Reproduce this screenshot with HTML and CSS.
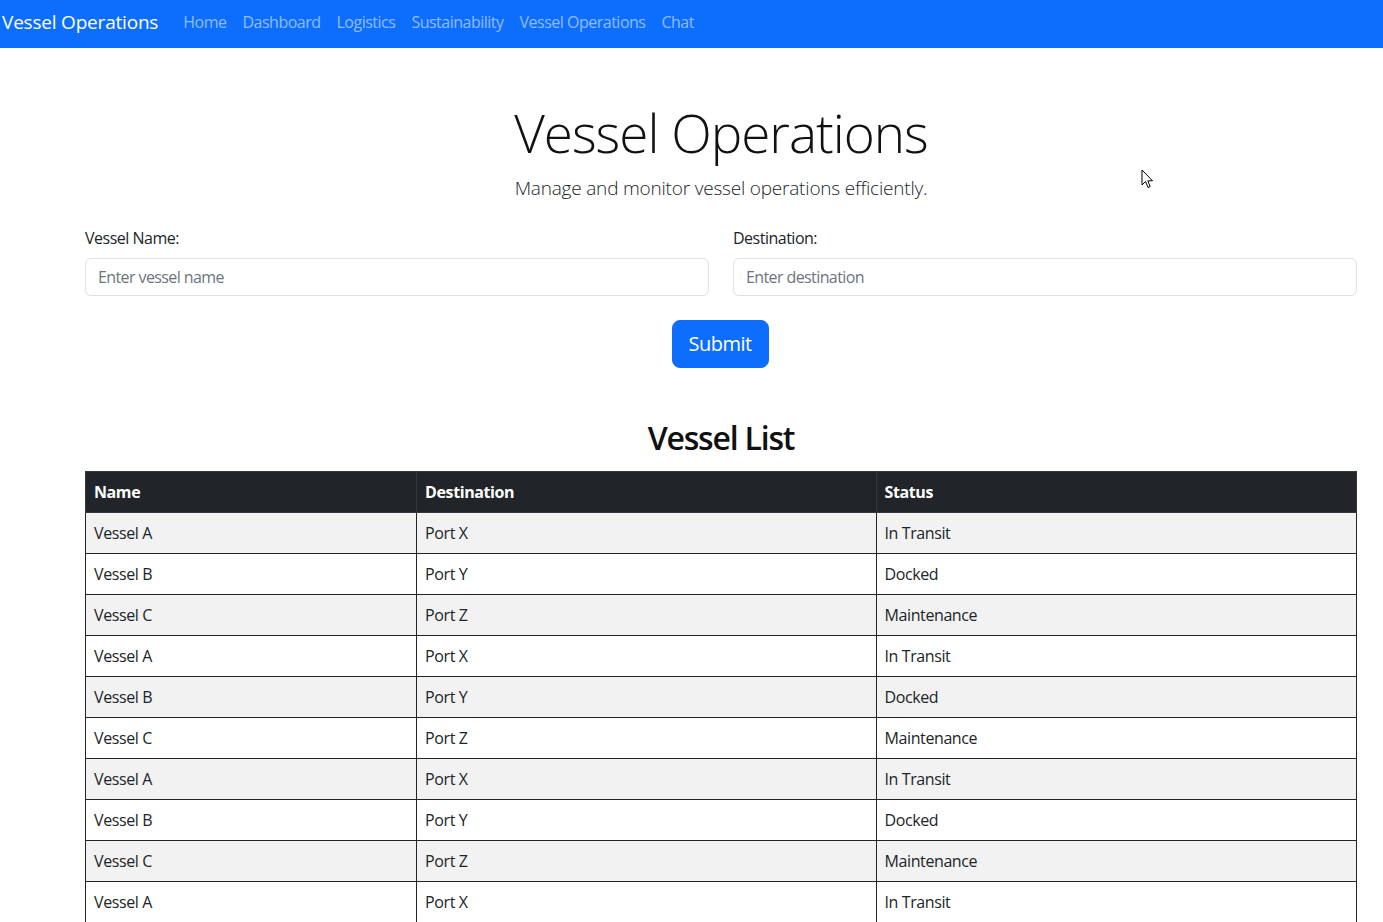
FILE: index.html
```html
<!DOCTYPE html>
<html lang="en">
<head>
<meta charset="utf-8">
<title>Vessel Operations</title>
<link rel="stylesheet" href="styles.css">
</head>
<body>
<nav class="navbar">
  <a class="brand" href="#">Vessel Operations</a>
  <ul class="nav-links">
    <li><a href="#">Home</a></li>
    <li><a href="#">Dashboard</a></li>
    <li><a href="#">Logistics</a></li>
    <li><a href="#">Sustainability</a></li>
    <li><a href="#">Vessel Operations</a></li>
    <li><a href="#">Chat</a></li>
  </ul>
</nav>
<main class="container">
  <header class="hero">
    <h1 class="display">Vessel Operations</h1>
    <p class="lead">Manage and monitor vessel operations efficiently.</p>
  </header>
  <form class="vessel-form">
    <div class="form-row">
      <div class="field">
        <label for="vname">Vessel Name:</label>
        <input id="vname" type="text" placeholder="Enter vessel name">
      </div>
      <div class="field">
        <label for="vdest">Destination:</label>
        <input id="vdest" type="text" placeholder="Enter destination">
      </div>
    </div>
    <div class="form-actions">
      <button type="button" class="btn-primary">Submit</button>
    </div>
  </form>
  <section class="list">
    <h2>Vessel List</h2>
    <table class="vessel-table">
      <colgroup><col class="c1"><col class="c2"><col class="c3"></colgroup>
      <thead>
        <tr><th>Name</th><th>Destination</th><th>Status</th></tr>
      </thead>
      <tbody>
        <tr><td>Vessel A</td><td>Port X</td><td>In Transit</td></tr>
        <tr><td>Vessel B</td><td>Port Y</td><td>Docked</td></tr>
        <tr><td>Vessel C</td><td>Port Z</td><td>Maintenance</td></tr>
        <tr><td>Vessel A</td><td>Port X</td><td>In Transit</td></tr>
        <tr><td>Vessel B</td><td>Port Y</td><td>Docked</td></tr>
        <tr><td>Vessel C</td><td>Port Z</td><td>Maintenance</td></tr>
        <tr><td>Vessel A</td><td>Port X</td><td>In Transit</td></tr>
        <tr><td>Vessel B</td><td>Port Y</td><td>Docked</td></tr>
        <tr><td>Vessel C</td><td>Port Z</td><td>Maintenance</td></tr>
        <tr><td>Vessel A</td><td>Port X</td><td>In Transit</td></tr>
      </tbody>
    </table>
  </section>
</main>
<svg class="cursor" width="13" height="21" viewBox="0 0 13 21"><path d="M1 1 L1 16 L4.5 12.5 L7 18.5 L9.2 17.6 L6.8 11.8 L11.5 11.8 Z" fill="#fff" stroke="#000" stroke-width="1" stroke-linejoin="round"/></svg>
</body>
</html>
```

FILE: styles.css
```css
* { box-sizing: border-box; }
html, body { margin: 0; padding: 0; }
body {
  font-family: "Open Sans", "Noto Sans", "Liberation Sans", sans-serif;
  font-size: 16px;
  line-height: 1.5;
  color: #212529;
  background: #fff;
  position: relative;
}
a { text-decoration: none; }

.navbar {
  height: 48px;
  background: #0d6efd;
  display: flex;
  align-items: center;
  padding: 0 2px 5px;
}
.brand {
  color: #fff;
  font-size: 19px;
  margin-right: 17px;
  letter-spacing: -0.2px;
  line-height: 30px;
}
.nav-links {
  list-style: none;
  margin: 0;
  padding: 0;
  display: flex;
}
.nav-links a {
  display: block;
  padding: 0 8px;
  color: rgba(255,255,255,0.55);
  font-size: 16px;
  letter-spacing: -0.5px;
}

.container {
  padding: 0 26px 0 85px;
}

.hero {
  text-align: center;
  padding-top: 53px;
}
.display {
  font-size: 53px;
  font-weight: 300;
  line-height: 1.2;
  margin: 0;
  letter-spacing: -1px;
  color: #111;
}
.lead {
  font-size: 19px;
  font-weight: 300;
  margin: 9px 0 0;
  letter-spacing: -0.2px;
}

.vessel-form { margin-top: 24px; }
.form-row {
  display: grid;
  grid-template-columns: 1fr 1fr;
  gap: 24px;
}
.field label {
  display: block;
  margin-bottom: 8px;
  letter-spacing: -0.5px;
}
.field input {
  display: block;
  width: 100%;
  height: 38px;
  padding: 6px 12px;
  font: inherit;
  letter-spacing: -0.6px;
  color: #212529;
  border: 1px solid #dee2e6;
  border-radius: 6px;
  background: #fff;
}
.field input::placeholder { color: #6c757d; opacity: 1; }
.form-actions {
  display: flex;
  justify-content: center;
  margin-top: 24px;
  padding-right: 2px;
}
.btn-primary {
  font: inherit;
  font-size: 20px;
  line-height: 30px;
  padding: 8px 16px;
  width: 97px;
  height: 48px;
  color: #fff;
  background: #0d6efd;
  border: 1px solid #0d6efd;
  border-radius: 8px;
  letter-spacing: -0.5px;
}

.list { margin-top: 51px; }
.list h2 {
  text-align: center;
  font-size: 32px;
  font-weight: 600;
  line-height: 1.2;
  margin: 0 0 14px;
  letter-spacing: -1.2px;
  color: #111;
}
.vessel-table {
  width: 100%;
  border-collapse: collapse;
  table-layout: fixed;
}
.c1 { width: 26.05%; }
.c2 { width: 36.15%; }
.c3 { width: 37.8%; }
.vessel-table th,
.vessel-table td {
  text-align: left;
  padding: 8px;
  line-height: 24px;
  border: 1px solid #212529;
  letter-spacing: -0.4px;
}
.vessel-table thead th {
  background: #212529;
  color: #fff;
  font-weight: 700;
  border-color: #32383e;
}
.vessel-table tbody tr:nth-child(odd) td { background: #f2f2f2; }

.cursor {
  position: absolute;
  left: 1141px;
  top: 169px;
}
```
